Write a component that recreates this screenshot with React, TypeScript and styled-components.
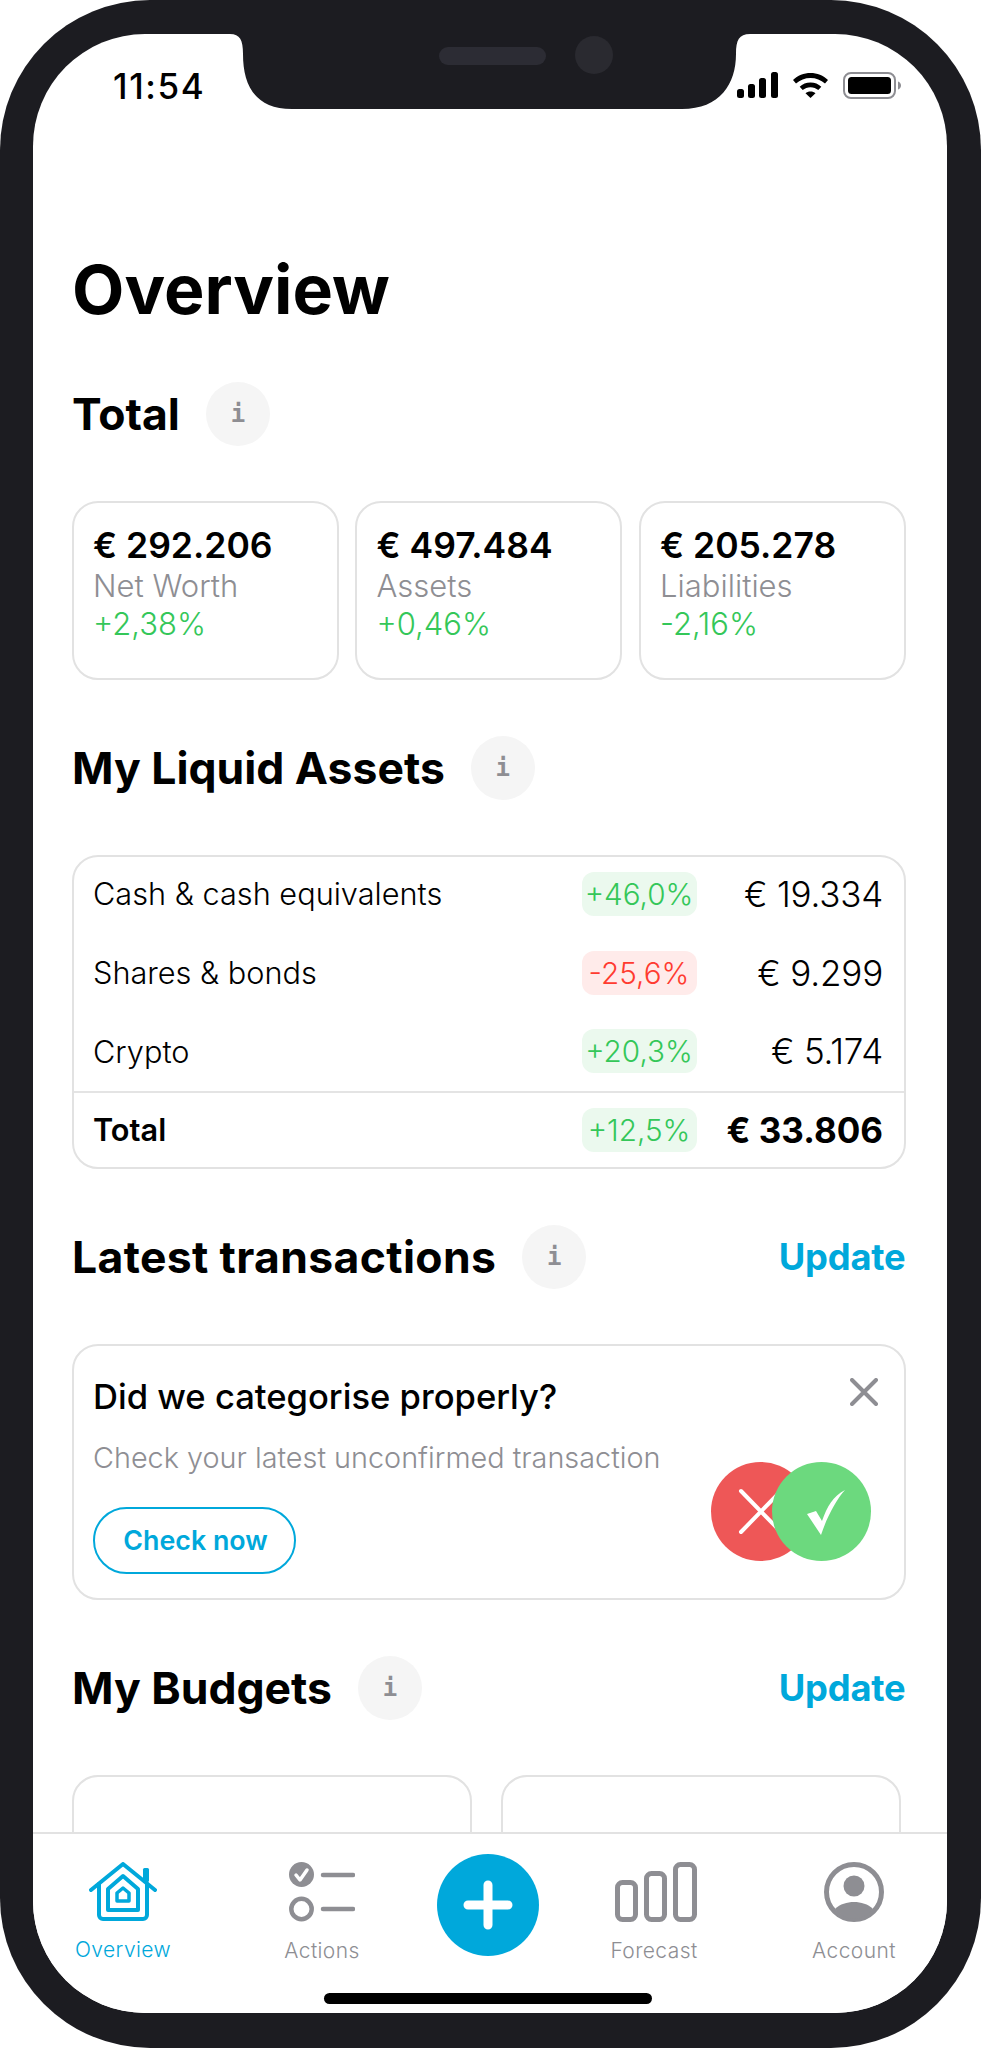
import React from "react";
import styled, { createGlobalStyle } from "styled-components";

const Global = createGlobalStyle`
  html, body { margin: 0; padding: 0; background: #fff; }
  body { font-family: "Inter", "Liberation Sans", sans-serif; color: #000; -webkit-font-smoothing: antialiased; }
  * { box-sizing: border-box; }
`;

const Frame = styled.div`
  width: 981px;
  height: 2048px;
  background: #1c1c21;
  border-radius: 150px;
  padding: 34px 34px 35px 33px;
  overflow: hidden;
`;
const Screen = styled.div`
  position: relative;
  width: 914px;
  height: 1979px;
  background: #fff;
  border-radius: 112px;
  overflow: hidden;
  display: flex;
  flex-direction: column;
`;
const NotchShape = styled.svg`
  position: absolute;
  left: 197px;
  top: 0;
  display: block;
`;
const StatusRow = styled.div`
  height: 104px;
  flex: none;
  display: flex;
  align-items: center;
  justify-content: space-between;
  padding: 0 46px 0 80px;
`;
const Time = styled.div`
  font-size: 35px;
  font-weight: 500;
  letter-spacing: 1.6px;
  line-height: 40px;
`;
const StatusIcons = styled.div`
  display: flex;
  align-items: center;
  gap: 15px;
  padding-bottom: 2px;
`;
const Scroll = styled.div`
  flex: 1;
  min-height: 0;
  overflow: hidden;
  padding: 114px 41.5px 0 38.5px;
`;
const Title = styled.h1`
  margin: 0 0 0 0.5px;
  font-size: 68px;
  line-height: 74px;
  font-weight: 700;
`;
const Head = styled.div`
  display: flex;
  align-items: center;
  height: 64px;
  margin: 56px 0 55px;
  padding-left: 0.5px;
`;
const Heading = styled.h2<{ $track?: string }>`
  margin: 0;
  font-size: 44.5px;
  line-height: 64px;
  font-weight: 700;
  letter-spacing: ${(p) => p.$track || "0"};
`;
const Info = styled.span`
  width: 64px;
  height: 64px;
  margin-left: 26px;
  border-radius: 50%;
  background: #f5f5f5;
  color: #8e8e93;
  display: flex;
  align-items: center;
  justify-content: center;
  font-family: "DejaVu Sans Mono", "Liberation Mono", monospace;
  font-weight: 700;
  font-size: 24px;
`;
const Update = styled.span`
  margin-left: auto;
  color: #00a8db;
  font-size: 36.3px;
  font-weight: 700;
  letter-spacing: -0.2px;
`;
const Cards = styled.div`
  display: grid;
  grid-template-columns: repeat(3, 267px);
  column-gap: 16.5px;
`;
const Stat = styled.div`
  height: 179px;
  border: 2px solid #e2e2e2;
  border-radius: 26px;
  padding: 22px 19.5px 0;
`;
const StatValue = styled.div`
  font-size: 35.5px;
  line-height: 41px;
  font-weight: 600;
`;
const StatLabel = styled.div`
  font-size: 31px;
  line-height: 39px;
  font-weight: 300;
  color: #8e8e93;
`;
const StatChange = styled.div`
  font-size: 31px;
  line-height: 38px;
  font-weight: 300;
  color: #34c759;
`;
const Table = styled.div`
  border: 2px solid #e2e2e2;
  border-radius: 26px;
  overflow: hidden;
`;
const Rows = styled.div`
  margin-top: -2.4px;
`;
const Row = styled.div<{ $total?: boolean }>`
  height: ${(p) => (p.$total ? "76.3px" : "78.7px")};
  display: flex;
  align-items: center;
  padding: 0 20.5px 0 19.5px;
  border-top: ${(p) => (p.$total ? "2px solid #e4e4e4" : "none")};
`;
const RowLabel = styled.div<{ $total?: boolean }>`
  flex: 1;
  font-size: 30.7px;
  font-weight: ${(p) => (p.$total ? 600 : 300)};
`;
const Badge = styled.div<{ $down?: boolean }>`
  width: 115px;
  height: 44px;
  border-radius: 12px;
  display: flex;
  align-items: center;
  justify-content: center;
  font-size: 29.7px;
  font-weight: 300;
  color: ${(p) => (p.$down ? "#ff3b30" : "#34c759")};
  background: ${(p) => (p.$down ? "#ffebea" : "#ebf9ee")};
`;
const RowValue = styled.div<{ $total?: boolean }>`
  width: 186.5px;
  text-align: right;
  font-size: 35px;
  letter-spacing: ${(p) => (p.$total ? "0" : "-0.2px")};
  font-weight: ${(p) => (p.$total ? 700 : 300)};
`;
const Banner = styled.div`
  position: relative;
  height: 256px;
  border: 2px solid #e2e2e2;
  border-radius: 26px;
  padding: 26px 19.5px 0;
`;
const BannerTitle = styled.div`
  font-size: 34.6px;
  line-height: 48px;
  font-weight: 500;
`;
const BannerText = styled.div`
  margin-top: 18px;
  font-size: 28.8px;
  line-height: 40px;
  font-weight: 300;
  color: #8e8e93;
`;
const CheckButton = styled.div`
  margin-top: 29px;
  width: 203px;
  height: 67px;
  border: 2px solid #00a8db;
  border-radius: 34px;
  display: flex;
  align-items: center;
  justify-content: center;
  color: #00a8db;
  font-size: 26.8px;
  font-weight: 600;
  padding-left: 2px;
`;
const Close = styled.svg`
  position: absolute;
  top: 32px;
  right: 26px;
  display: block;
`;
const Verdict = styled.svg`
  position: absolute;
  top: 116px;
  left: 637px;
  display: block;
`;
const Budgets = styled.div`
  display: grid;
  grid-template-columns: 400px 400px;
  column-gap: 29px;
`;
const Budget = styled.div`
  height: 300px;
  border: 2px solid #e2e2e2;
  border-radius: 26px;
`;
const TabBar = styled.div`
  position: relative;
  flex: none;
  height: 181px;
  background: #fff;
  border-top: 2px solid #e2e2e2;
  display: grid;
  grid-template-columns: 180px 218px 114px 218px 182px;
  padding-top: 28px;
  align-items: start;
`;
const Tab = styled.div<{ $on?: boolean }>`
  display: flex;
  flex-direction: column;
  align-items: center;
  gap: 15px;
  color: ${(p) => (p.$on ? "#00a8db" : "#8e8e93")};
  font-size: 21px;
  font-weight: 300;
  letter-spacing: 0.4px;
  line-height: 28px;
  svg { display: block; }
`;
const ForecastSvg = styled.svg`
  margin-left: 3px;
`;
const Add = styled.div`
  width: 102px;
  height: 102px;
  margin: -8px auto 0;
  border-radius: 50%;
  background: #00a8db;
  display: flex;
  align-items: center;
  justify-content: center;
`;
const HomeBar = styled.div`
  position: absolute;
  left: 291px;
  top: 159px;
  width: 328px;
  height: 11px;
  border-radius: 6px;
  background: #000;
`;

const Signal = () => (
  <svg width="41" height="26" viewBox="0 0 41 26">
    <rect x="0" y="17" width="7" height="9" rx="2.5" />
    <rect x="11" y="12" width="7" height="14" rx="2.5" />
    <rect x="22" y="6" width="7" height="20" rx="2.5" />
    <rect x="34" y="0" width="7" height="26" rx="2.5" />
  </svg>
);
const Wifi = () => (
  <svg width="35" height="25" viewBox="0 0 35 25">
    <path d="M17.5 0C24 0 30.5 2.5 35 7l-3 3.5C28 7 23 5 17.5 5S7 7 3 10.500L0 7C4.500 2.500 11 0 17.500 0z" />
    <path d="M17.5 9.500c4.200 0 8 1.500 10.800 4.200l-3 3.400c-2.200-1.900-4.800-2.900-7.800-2.900s-5.600 1-7.800 2.900l-3-3.400c2.800-2.700 6.600-4.200 10.800-4.200z" />
    <path d="M17.5 18.500c2 0 3.700 .6 5 1.700L17.500 25l-5-4.800c1.300-1.100 3-1.700 5-1.700z" />
  </svg>
);
const Battery = () => (
  <svg width="58" height="27" viewBox="0 0 58 27">
    <rect x="1" y="1" width="51" height="25" rx="7" fill="none" stroke="#8e8e93" strokeWidth="2" />
    <rect x="5" y="5" width="43" height="17" rx="3.5" />
    <path d="M55 9.500c1.700.6 3 2 3 4s-1.300 3.400-3 4z" fill="#8e8e93" />
  </svg>
);

const HomeIcon = () => (
  <svg width="68" height="59" viewBox="0 0 68 59" fill="none" stroke="#00a8db" strokeLinecap="round" strokeLinejoin="round">
    <path d="M2 28L34 2 66 28" strokeWidth="4" />
    <rect x="54" y="6" width="6" height="14" rx="1.500" fill="#00a8db" stroke="none" />
    <path d="M10 22V53a4 4 0 0 0 4 4H54a4 4 0 0 0 4-4V22" strokeWidth="4" />
    <path d="M19 27L34 14 49 27V48H19z" strokeWidth="4" />
    <path d="M28 31L34 26 40 31V39H28z" strokeWidth="3.500" />
  </svg>
);
const ActionsIcon = () => (
  <svg width="66" height="60" viewBox="0 0 66 60" fill="none" stroke="#8e8e93" strokeLinecap="round">
    <circle cx="12.500" cy="12.500" r="12.500" fill="#8e8e93" stroke="none" />
    <path d="M7 13l4 5 7-10" stroke="#fff" strokeWidth="3.500" strokeLinejoin="round" />
    <path d="M34 13H64M34 47H64" strokeWidth="4.500" />
    <circle cx="12.500" cy="47" r="10.200" strokeWidth="4.500" />
  </svg>
);
const ForecastIcon = () => (
  <ForecastSvg width="82" height="60" viewBox="0 0 82 60" fill="none" stroke="#8e8e93" strokeWidth="5">
    <rect x="2.500" y="20.500" width="18" height="37" rx="5" />
    <rect x="31.500" y="11.500" width="18" height="46" rx="5" />
    <rect x="60.500" y="2.500" width="19" height="55" rx="5" />
  </ForecastSvg>
);
const AccountIcon = () => (
  <svg width="60" height="60" viewBox="0 0 60 60" fill="#8e8e93">
    <circle cx="30" cy="30" r="27.500" fill="none" stroke="#8e8e93" strokeWidth="5" />
    <circle cx="30" cy="24" r="10.500" />
    <path d="M11 47C16 42 23 40 30 40s14 2 19 7A27 27 0 0 1 30 57 27 27 0 0 1 11 47z" />
  </svg>
);

const Section = ({ title, track, update, children }: { title: string; track?: string; update?: boolean; children: React.ReactNode }) => (
  <>
    <Head>
      <Heading $track={track}>{title}</Heading>
      <Info>i</Info>
      {update && <Update>Update</Update>}
    </Head>
    {children}
  </>
);

const stats = [
  ["€ 292.206", "Net Worth", "+2,38%"],
  ["€ 497.484", "Assets", "+0,46%"],
  ["€ 205.278", "Liabilities", "-2,16%"],
];
const rows = [
  ["Cash & cash equivalents", "+46,0%", "€ 19.334"],
  ["Shares & bonds", "-25,6%", "€ 9.299"],
  ["Crypto", "+20,3%", "€ 5.174"],
];

export default function App() {
  return (
    <Frame>
      <Global />
      <Screen>
        <StatusRow>
          <Time>11:54</Time>
          <StatusIcons>
            <Signal />
            <Wifi />
            <Battery />
          </StatusIcons>
        </StatusRow>
        <Scroll>
          <Title>Overview</Title>
          <Section title="Total">
            <Cards>
              {stats.map(([v, l, c]) => (
                <Stat key={l}>
                  <StatValue>{v}</StatValue>
                  <StatLabel>{l}</StatLabel>
                  <StatChange>{c}</StatChange>
                </Stat>
              ))}
            </Cards>
          </Section>
          <Section title="My Liquid Assets">
            <Table>
              <Rows>
                {rows.map(([l, b, v]) => (
                  <Row key={l}>
                    <RowLabel>{l}</RowLabel>
                    <Badge $down={b.startsWith("-")}>{b}</Badge>
                    <RowValue>{v}</RowValue>
                  </Row>
                ))}
                <Row $total>
                  <RowLabel $total>Total</RowLabel>
                  <Badge>+12,5%</Badge>
                  <RowValue $total>€ 33.806</RowValue>
                </Row>
              </Rows>
            </Table>
          </Section>
          <Section title="Latest transactions" track="0.35px" update>
            <Banner>
              <BannerTitle>Did we categorise properly?</BannerTitle>
              <BannerText>Check your latest unconfirmed transaction</BannerText>
              <CheckButton>Check now</CheckButton>
              <Close width="28" height="28" viewBox="0 0 28 28" fill="none" stroke="#8e8e93" strokeWidth="4" strokeLinecap="round">
                <path d="M2 2L26 26M26 2L2 26" />
              </Close>
              <Verdict width="160" height="99" viewBox="0 0 160 99">
                <circle cx="49.500" cy="49.500" r="49.500" fill="#ee5757" />
                <path d="M30 29L70 70M70 29L30 70" stroke="#fff" strokeWidth="4" strokeLinecap="round" />
                <circle cx="110.500" cy="49.500" r="49.500" fill="#6cd97e" />
                <path d="M96 52l9-3 6 10C116 45 122 34 134 28c-9 10-18 27-24 45z" fill="#fff" />
              </Verdict>
            </Banner>
          </Section>
          <Section title="My Budgets" update>
            <Budgets>
              <Budget />
              <Budget />
            </Budgets>
          </Section>
        </Scroll>
        <TabBar>
          <Tab $on><HomeIcon />Overview</Tab>
          <Tab><ActionsIcon />Actions</Tab>
          <Add>
            <svg width="50" height="50" viewBox="0 0 50 50" stroke="#fff" strokeWidth="9" strokeLinecap="round">
              <path d="M25 5V45M5 25H45" />
            </svg>
          </Add>
          <Tab><ForecastIcon />Forecast</Tab>
          <Tab><AccountIcon />Account</Tab>
          <HomeBar />
        </TabBar>
        <NotchShape width="520" height="75" viewBox="0 0 520 75" fill="#1c1c21">
          <path d="M0 0C10 0 13 6 13 20 C13 50 24 75 62 75H452C490 75 506 50 506 20 C506 6 509 0 520 0z" />
          <rect x="209" y="13" width="107" height="18" rx="9" fill="#2c2c34" />
          <circle cx="364" cy="21" r="19" fill="#2a2a30" />
        </NotchShape>
      </Screen>
    </Frame>
  );
}
